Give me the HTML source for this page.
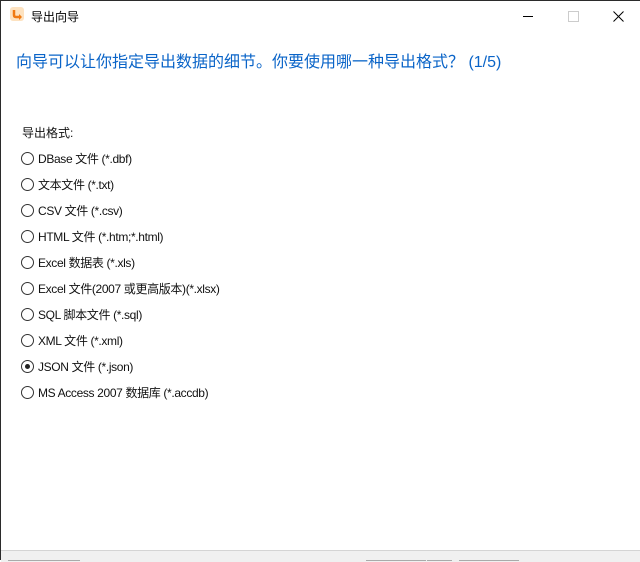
<!DOCTYPE html>
<html><head><meta charset="utf-8"><style>
body{margin:0;width:640px;height:560px;overflow:hidden;background:#fff;font-family:"Liberation Sans","Noto Sans CJK SC",sans-serif;position:relative}
.win{position:absolute;left:0;top:0;width:640px;height:560px;border-top:1px solid #2b2b2b;border-left:1px solid #2b2b2b;box-sizing:border-box}
.t{position:absolute;white-space:nowrap}
.r{position:absolute;left:20px;width:11px;height:11px;border:1px solid #333;border-radius:50%;background:#fff}
.r.on::after{content:"";position:absolute;left:3px;top:3px;width:5px;height:5px;border-radius:50%;background:#222}
.l{position:absolute;left:37px;font-size:12px;color:#111;white-space:nowrap;letter-spacing:-0.35px}
</style></head><body><div class="win">
<div style="position:absolute;left:9px;top:6px;width:14px;height:14px;background:#fde2c0;border-radius:3px"></div>
<svg style="position:absolute;left:9px;top:6px" width="14" height="14"><path d="M4 3 V8 Q4 10 6 10 H11" stroke="#f07a12" stroke-width="2.5" fill="none"/><path d="M9 7 L12 10 L9 13" fill="#f07a12"/></svg>
<div class="t" style="left:30px;top:7px;font-size:12px;color:#000">导出向导</div>
<div style="position:absolute;left:522px;top:15px;width:10px;height:1px;background:#000"></div>
<div style="position:absolute;left:567px;top:10px;width:9px;height:9px;border:1px solid #ccc"></div>
<svg style="position:absolute;left:612px;top:10px" width="11" height="11"><path d="M0.5 0.5 L10.5 10.5 M10.5 0.5 L0.5 10.5" stroke="#000" stroke-width="1"/></svg>
<div class="t" style="left:15px;top:47px;font-size:16px;color:#0a64c8">向导可以让你指定导出数据的细节。你要使用哪一种导出格式？ (1/5)</div>
<div class="t" style="left:21px;top:123px;font-size:12px;color:#111">导出格式:</div>
<div class="r" style="top:151px"></div><div class="l" style="top:149px">DBase 文件 (*.dbf)</div>
<div class="r" style="top:177px"></div><div class="l" style="top:175px">文本文件 (*.txt)</div>
<div class="r" style="top:203px"></div><div class="l" style="top:201px">CSV 文件 (*.csv)</div>
<div class="r" style="top:229px"></div><div class="l" style="top:227px">HTML 文件 (*.htm;*.html)</div>
<div class="r" style="top:255px"></div><div class="l" style="top:253px">Excel 数据表 (*.xls)</div>
<div class="r" style="top:281px"></div><div class="l" style="top:279px">Excel 文件(2007 或更高版本)(*.xlsx)</div>
<div class="r" style="top:307px"></div><div class="l" style="top:305px">SQL 脚本文件 (*.sql)</div>
<div class="r" style="top:333px"></div><div class="l" style="top:331px">XML 文件 (*.xml)</div>
<div class="r on" style="top:359px"></div><div class="l" style="top:357px">JSON 文件 (*.json)</div>
<div class="r" style="top:385px"></div><div class="l" style="top:383px">MS Access 2007 数据库 (*.accdb)</div>
<div style="position:absolute;left:0;top:549px;width:640px;height:11px;background:#f0f0f0;border-top:1px solid #d4d4d4"></div>
<div style="position:absolute;left:7px;top:559px;width:72px;height:1px;background:#aaa"></div>
<div style="position:absolute;left:365px;top:559px;width:60px;height:1px;background:#aaa"></div>
<div style="position:absolute;left:426px;top:559px;width:25px;height:1px;background:#aaa"></div>
<div style="position:absolute;left:458px;top:559px;width:60px;height:1px;background:#aaa"></div>
</div></body></html>
